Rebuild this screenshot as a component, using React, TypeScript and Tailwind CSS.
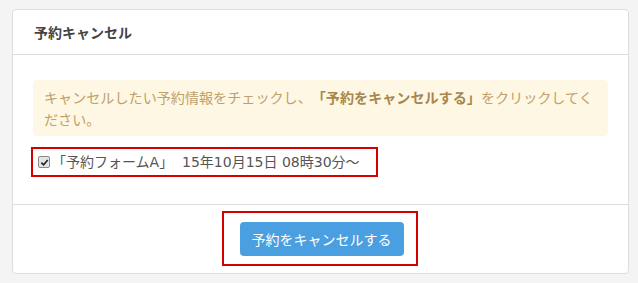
export default function App() {
  return (
    <div className="min-h-screen bg-[#f4f4f4] pl-[12px] pt-[9px] font-['Noto_Sans_CJK_JP','Noto_Sans',sans-serif] [text-spacing-trim:space-all]">
      <div className="w-[617px] rounded-[4px] border border-[#dddddd] bg-white">
        <div className="flex h-[45px] items-center border-b border-[#dddddd] px-[21px]">
          <h2 className="text-[14px] font-bold text-[#444444]">予約キャンセル</h2>
        </div>

        <div className="px-[20px] pb-[27px] pt-[25px]">
          <div className="rounded-[4px] bg-[#fdf7e3] px-[11px] py-[6px] text-[14.1px] leading-[22px] text-[#bfa06a]">
            キャンセルしたい予約情報をチェックし、
            <strong className="font-bold text-[#a8874f]">「予約をキャンセルする」</strong>
            をクリックしてください。
          </div>

          <div className="ml-[-2px] mt-[11px] inline-flex h-[30px] items-center border-2 border-[#d40000] pl-[5px] pr-[16px]">
            <label className="flex items-center text-[14px] text-[#555555]">
              <span className="mr-[2px] flex h-[12px] w-[12px] items-center justify-center rounded-[2px] border border-[#8a8a8a] bg-[#e4e4e4]">
                <svg viewBox="0 0 10 10" className="h-[9px] w-[9px]">
                  <path d="M1.5 5.2 L4 7.6 L8.6 2.2" fill="none" stroke="#222" strokeWidth="1.8" />
                </svg>
              </span>
              <span className="whitespace-pre font-['DejaVu_Sans','Noto_Sans_CJK_JP',sans-serif]">
                {"「予約フォームA」  15年10月15日 08時30分～"}
              </span>
            </label>
          </div>
        </div>

        <div className="flex justify-center border-t border-[#dddddd] pb-[7px] pt-[6px]">
          <div className="ml-[-2px] border-2 border-[#d40000] pb-[8px] pl-[16px] pr-[12px] pt-[9px]">
            <button
              type="button"
              className="h-[34px] rounded-[4px] bg-[#4a9fe0] px-[12px] text-[14px] text-white"
            >
              予約をキャンセルする
            </button>
          </div>
        </div>
      </div>
    </div>
  );
}
